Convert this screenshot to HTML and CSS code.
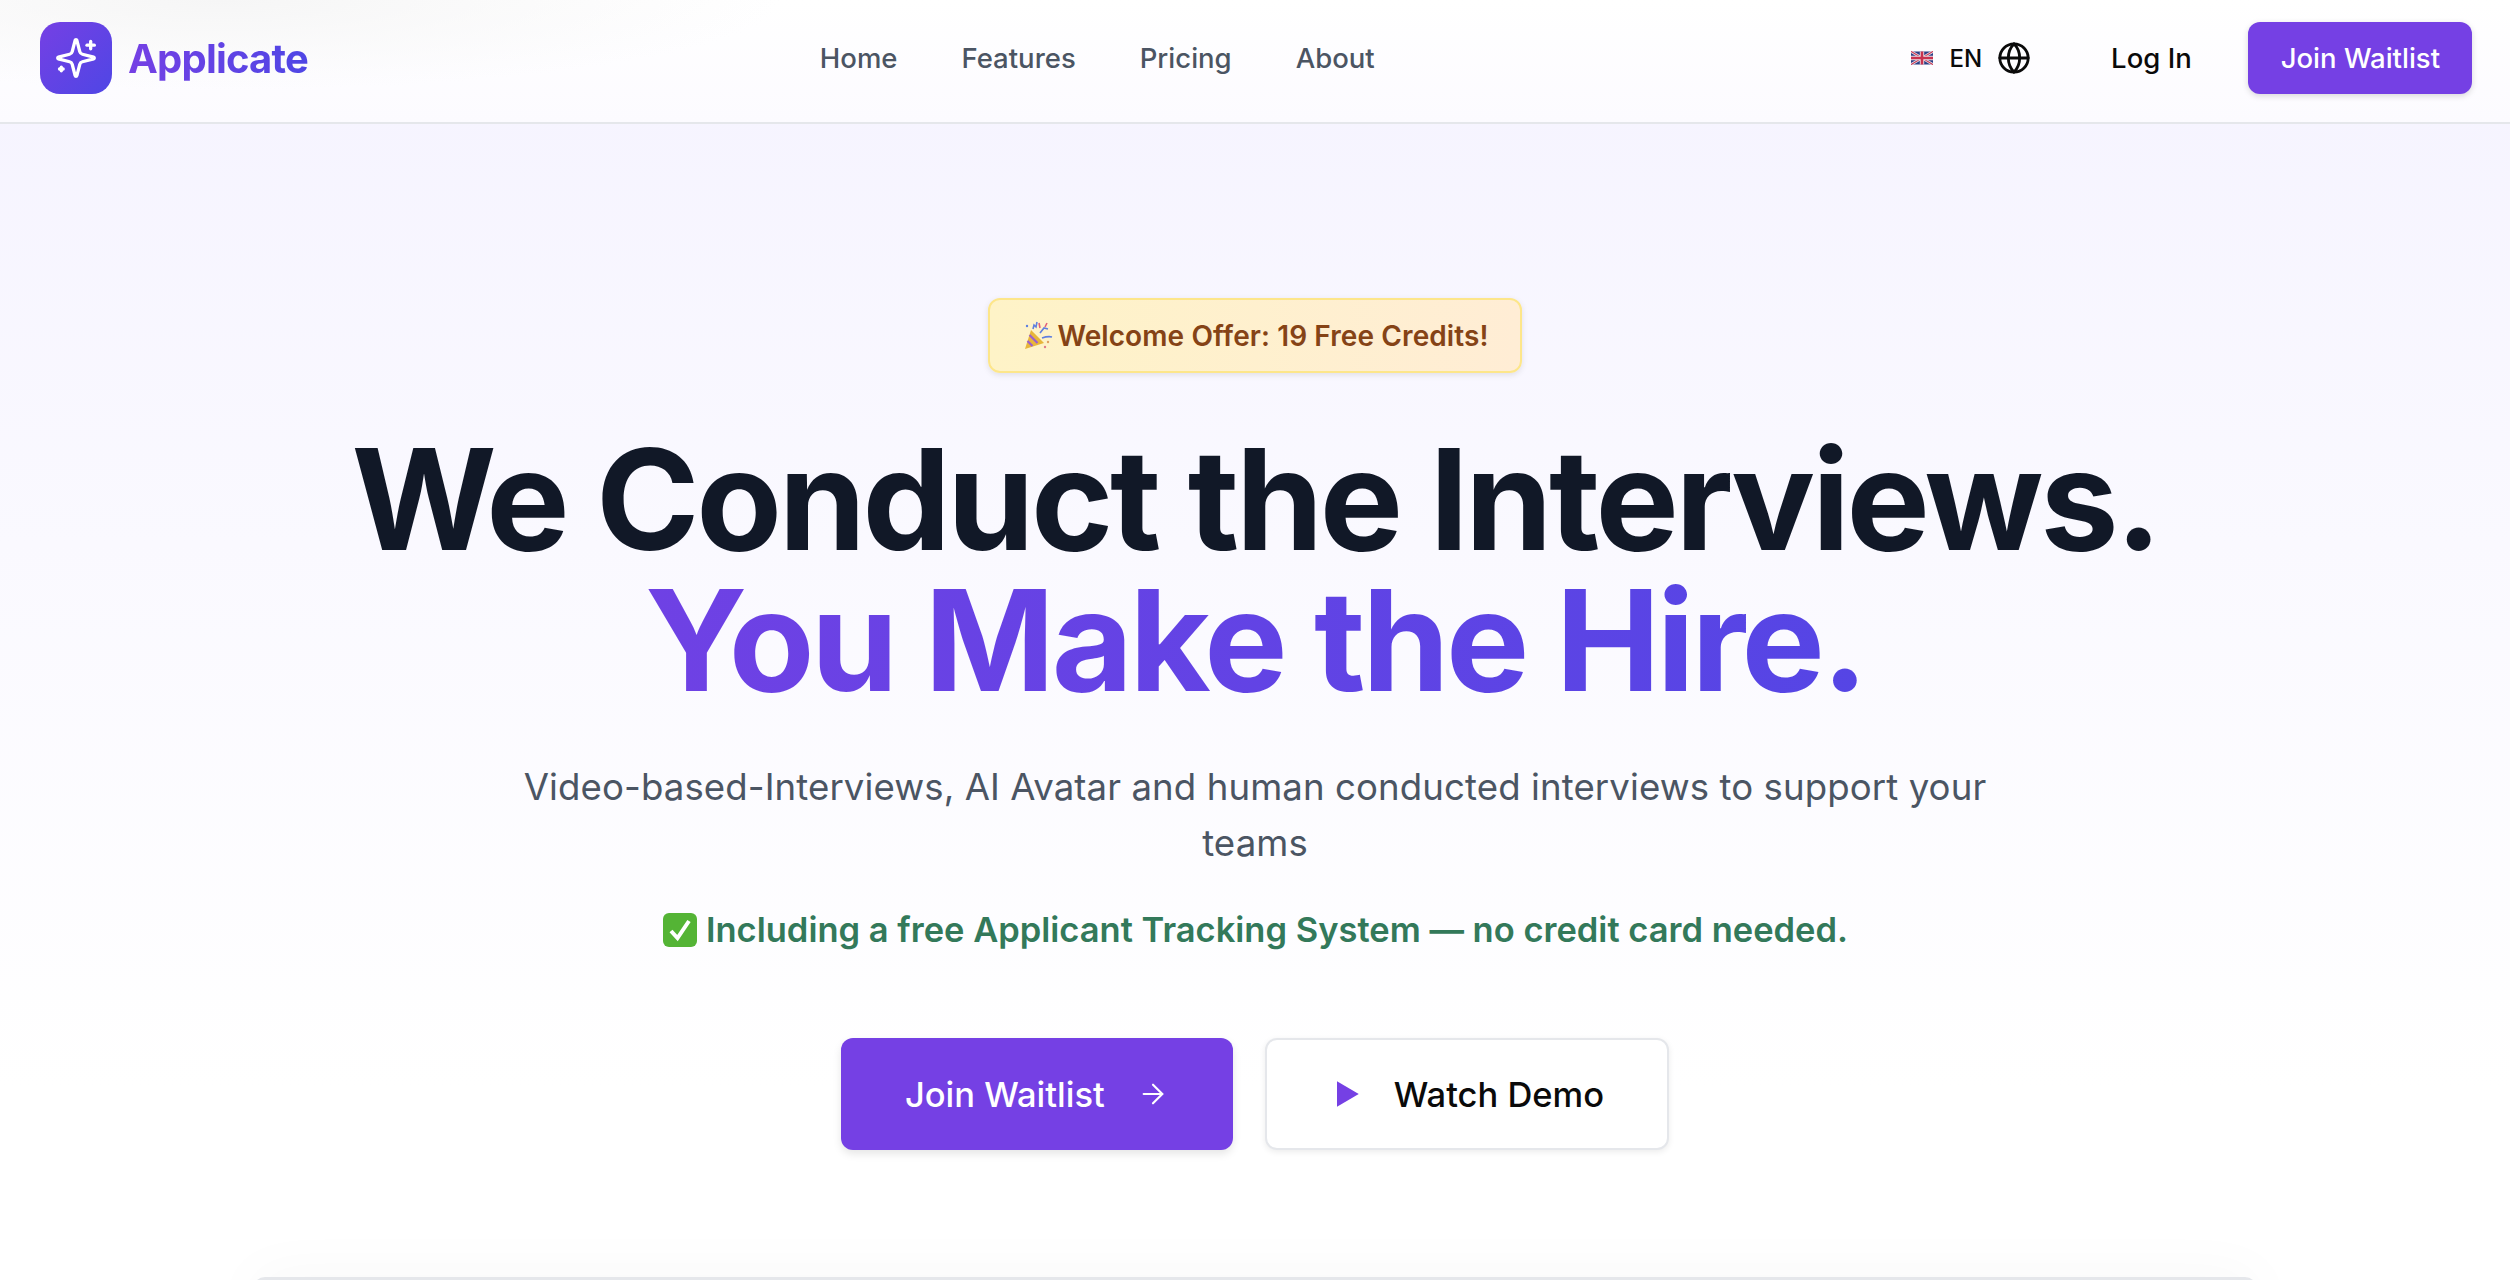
FILE: index.html
```html
<!DOCTYPE html>
<html lang="en">
<head>
    <meta charset="UTF-8">
    <meta name="viewport" content="width=device-width, initial-scale=1.0">
    <title>Applicate</title>
    <link rel="stylesheet" href="styles.css">
</head>
<body>
    <nav class="navbar">
        <a class="brand" href="#">
            <span class="brand-icon">
                <svg viewBox="0 0 24 24" width="44" height="44" fill="none" stroke="#fff" stroke-width="1.8" stroke-linecap="round" stroke-linejoin="round">
                    <path d="M9.94 15.5A2 2 0 0 0 8.5 14.06l-6.13-1.58a.5.5 0 0 1 0-.96L8.5 9.94A2 2 0 0 0 9.94 8.5l1.58-6.14a.5.5 0 0 1 .96 0L14.06 8.5A2 2 0 0 0 15.5 9.94l6.13 1.58a.5.5 0 0 1 0 .96L15.5 14.06a2 2 0 0 0-1.44 1.44l-1.58 6.13a.5.5 0 0 1-.96 0z"/>
                    <path d="M20 3v4"/>
                    <path d="M22 5h-4"/>
                    <path d="M4 17v2"/>
                    <path d="M5 18H3"/>
                </svg>
            </span>
            <span class="brand-name">Applicate</span>
        </a>
        <div class="nav-links">
            <a href="#">Home</a>
            <a href="#">Features</a>
            <a href="#">Pricing</a>
            <a href="#">About</a>
        </div>
        <div class="nav-actions">
            <div class="lang">
                <svg class="flag" viewBox="0 0 60 36" width="22" height="14">
                    <rect width="60" height="36" rx="3" fill="#2b3f86"/>
                    <path d="M0 0L60 36M60 0L0 36" stroke="#e6dfe6" stroke-width="7"/>
                    <path d="M0 0L60 36M60 0L0 36" stroke="#c8324f" stroke-width="3"/>
                    <path d="M30 0V36M0 18H60" stroke="#e6dfe6" stroke-width="12"/>
                    <path d="M30 0V36M0 18H60" stroke="#c8324f" stroke-width="7"/>
                </svg>
                <span class="lang-code">EN</span>
                <svg viewBox="0 0 24 24" width="34" height="34" fill="none" stroke="#0a0a0a" stroke-width="2" stroke-linecap="round" stroke-linejoin="round">
                    <circle cx="12" cy="12" r="10"/>
                    <path d="M12 2a14.5 14.5 0 0 0 0 20 14.5 14.5 0 0 0 0-20"/>
                    <path d="M2 12h20"/>
                </svg>
            </div>
            <a class="login" href="#">Log In</a>
            <a class="btn-small" href="#">Join Waitlist</a>
        </div>
    </nav>

    <main class="hero">
        <div class="badge">
            <svg class="emoji" viewBox="0 0 32 32" width="32" height="32">
                <path d="M4 29L10 10l13 13z" fill="#e8b63a"/>
                <path d="M6.5 21l5 5M8.5 15l8 8" stroke="#9a5fd0" stroke-width="2.2"/>
                <path d="M12 9l1-4 2 2 1-5M19 13l4-5 4 1M21 18c3-1 6-2 10-1" fill="none" stroke="#5f7fe0" stroke-width="1.6"/>
                <path d="M18 3l1 5M26 3l-2 4" stroke="#e0607a" stroke-width="1.6"/>
                <circle cx="27" cy="22" r="1.2" fill="#e0a060"/>
                <circle cx="24" cy="27" r="1.2" fill="#e07a8a"/>
                <circle cx="6" cy="6" r="1.2" fill="#5f7fe0"/>
            </svg>
            <span>Welcome Offer: 19 Free Credits!</span>
        </div>
        <h1 class="headline">We Conduct the Interviews.<span class="headline-accent">You Make the Hire.</span></h1>
        <p class="subtitle">Video-based-Interviews, AI Avatar and human conducted interviews to support your teams</p>
        <p class="note">
            <svg class="emoji" viewBox="0 0 36 36" width="36" height="36">
                <rect x="1" y="1" width="34" height="34" rx="6" fill="#54b435"/>
                <path d="M9 19l6.5 7L27 9" fill="none" stroke="#fff" stroke-width="4"/>
            </svg>
            <span>Including a free Applicant Tracking System — no credit card needed.</span>
        </p>
        <div class="cta">
            <a class="btn btn-primary" href="#">
                Join Waitlist
                <svg viewBox="0 0 24 24" width="32" height="32" fill="none" stroke="#fff" stroke-width="1.6" stroke-linecap="round" stroke-linejoin="round">
                    <path d="M5 12h14"/>
                    <path d="M12 5l7 7-7 7"/>
                </svg>
            </a>
            <a class="btn btn-outline" href="#">
                <svg viewBox="0 0 24 24" width="36" height="36" fill="#7540e4">
                    <path d="M6 3.5L20.5 12 6 20.5z"/>
                </svg>
                Watch Demo
            </a>
        </div>
        <div class="divider"></div>
    </main>
</body>
</html>
```

FILE: styles.css
```css
* { box-sizing: border-box; }
html, body { margin: 0; height: 100%; }
body {
    font-family: Inter, "Noto Sans", sans-serif;
    background: linear-gradient(180deg, #f5f3ff 0%, #ffffff 85%);
    overflow: hidden;
}
a { text-decoration: none; color: inherit; }

.navbar {
    height: 124px;
    display: flex;
    justify-content: space-between;
    align-items: center;
    padding: 0 38px 6px 40px;
    background:
        radial-gradient(ellipse 560px 90px at 220px 0, #f6f6f6, transparent),
        linear-gradient(180deg, #ffffff 0%, #fcfbff 100%);
    border-bottom: 2px solid #e5e7eb;
}
.brand { display: flex; align-items: center; gap: 16px; }
.brand-icon {
    width: 72px;
    height: 72px;
    border-radius: 20px;
    background: linear-gradient(135deg, #7540e4, #4f46e5);
    display: flex;
    align-items: center;
    justify-content: center;
}
.brand-name {
    font-size: 40px;
    font-weight: 700;
    letter-spacing: -0.8px;
    background: linear-gradient(90deg, #7540e4, #4f46e5);
    -webkit-background-clip: text;
    background-clip: text;
    color: transparent;
}
.nav-links { display: flex; gap: 64px; font-size: 27.5px; font-weight: 500; color: #4b5563; margin-right: 25px; }
.nav-actions { display: flex; align-items: center; }
.lang { display: flex; align-items: center; font-size: 24px; font-weight: 500; color: #0a0a0a; }
.lang-code { margin: 0 15px 0 16px; }
.login { font-size: 27.5px; font-weight: 500; color: #0a0a0a; margin: 0 56px 0 80px; }
.btn-small {
    height: 72px;
    padding: 0 32px 0 33px;
    display: flex;
    align-items: center;
    font-size: 27.5px;
    font-weight: 500;
    color: #fff;
    background: #7540e4;
    border-radius: 12px;
    box-shadow: 0 2px 6px rgba(0, 0, 0, 0.15);
}

.hero { display: flex; flex-direction: column; align-items: center; padding-top: 174px; }
.badge {
    height: 75px;
    width: 534px;
    display: flex;
    align-items: center;
    justify-content: center;
    gap: 4px;
    font-size: 28px;
    font-weight: 600;
    letter-spacing: 0.1px;
    color: #854316;
    background: linear-gradient(90deg, #fef3c7, #ffedd5);
    border: 2px solid #fde68a;
    border-radius: 12px;
    box-shadow: 0 2px 6px rgba(0, 0, 0, 0.1);
}
.headline {
    margin: 56px 0 0;
    text-align: center;
    font-size: 140px;
    line-height: 141px;
    font-weight: 700;
    letter-spacing: -3.4px;
    color: #111827;
}
.headline-accent {
    display: block;
    background: linear-gradient(90deg, #7540e4, #4f46e5);
    -webkit-background-clip: text;
    background-clip: text;
    color: transparent;
}
.subtitle {
    width: 1500px;
    margin: 48px 0 0;
    text-align: center;
    font-size: 36.6px;
    letter-spacing: 0.1px;
    line-height: 56px;
    color: #4b5563;
}
.note {
    display: flex;
    align-items: center;
    gap: 8px;
    margin: 38px 0 0;
    font-size: 34.5px;
    font-weight: 600;
    color: #33795a;
}
.cta { display: flex; gap: 32px; margin-top: 88px; }
.btn {
    height: 112px;
    padding: 0 64px;
    display: flex;
    align-items: center;
    justify-content: center;
    font-size: 34.5px;
    font-weight: 500;
    border-radius: 12px;
}
.btn-primary { gap: 32px; color: #fff; background: #7540e4; box-shadow: 0 4px 8px rgba(0, 0, 0, 0.1); }
.btn-outline { gap: 30px; padding: 0 63px 0 61px; color: #0a0a0a; background: #fff; border: 2px solid #e5e7eb; box-shadow: 0 2px 6px rgba(0, 0, 0, 0.08); }
.divider {
    width: 2004px;
    height: 40px;
    margin-top: 127px;
    background: #fff;
    border-top: 3px solid #e5e7eb;
    border-radius: 12px 12px 0 0;
    box-shadow: 0 0 60px rgba(0, 0, 0, 0.04);
}
```
